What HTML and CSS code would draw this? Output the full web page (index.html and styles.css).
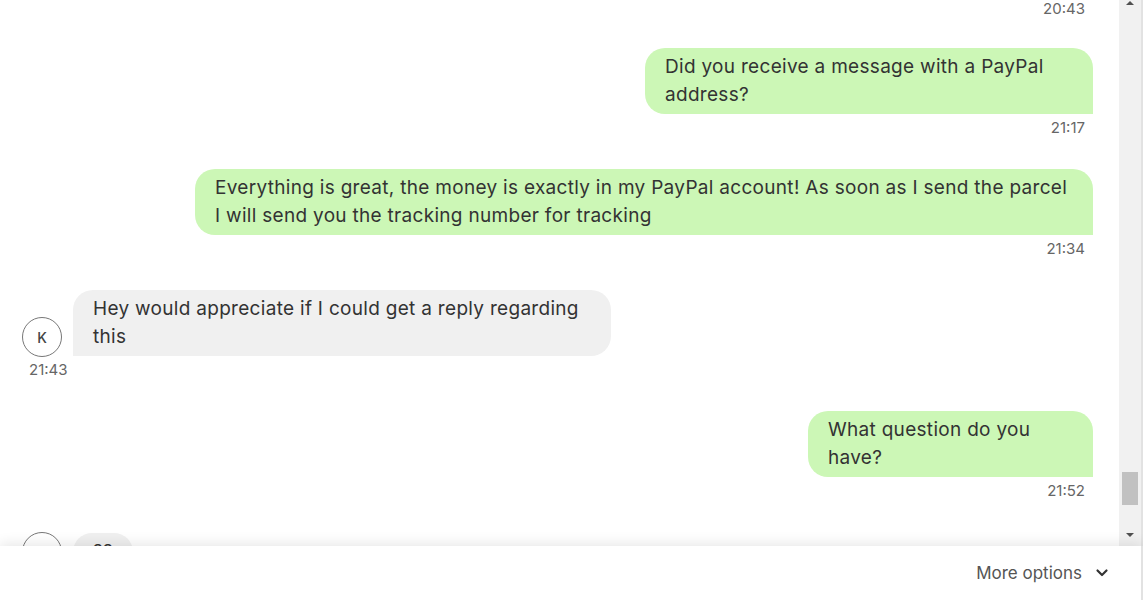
FILE: index.html
```html
<!DOCTYPE html>
<html lang="en">
<head>
<meta charset="UTF-8" />
<meta name="viewport" content="width=device-width, initial-scale=1" />
<title>Messages</title>
<link rel="stylesheet" href="styles.css">
</head>
<body>
<div class="chat">
  <div class="messages">
    <div class="msg out first">
      <div class="time">20:43</div>
    </div>

    <div class="msg out">
      <div class="bubble w-448">Did you receive a message with a PayPal<br>address?</div>
      <div class="time">21:17</div>
    </div>

    <div class="msg out">
      <div class="bubble w-898">Everything is great, the money is exactly in my PayPal account! As soon as I send the parcel<br>I will send you the tracking number for tracking</div>
      <div class="time">21:34</div>
    </div>

    <div class="msg in">
      <div class="row">
        <div class="avatar">K</div>
        <div class="bubble w-538">Hey would appreciate if I could get a reply regarding<br>this</div>
      </div>
      <div class="time">21:43</div>
    </div>

    <div class="msg out">
      <div class="bubble w-285">What question do you<br>have?</div>
      <div class="time">21:52</div>
    </div>

    <div class="msg in">
      <div class="row">
        <div class="avatar">K</div>
        <div class="bubble">??</div>
      </div>
    </div>
  </div>

  <!-- fake scrollbar, thumb sits near the bottom -->
  <div class="scrollbar">
    <div class="arrow up"></div>
    <div class="track">
      <div class="thumb"></div>
    </div>
    <div class="arrow down"></div>
  </div>
</div>

<footer class="footer">
  <button class="more">
    More options
    <svg width="14" height="14" viewBox="0 0 14 14"><path d="M2.5 4.5 L7 9 L11.5 4.5" fill="none" stroke="#333" stroke-width="2.2" stroke-linecap="round" stroke-linejoin="round"/></svg>
  </button>
</footer>
</body>
</html>
```

FILE: styles.css
```css
html, body {
  margin: 0;
  padding: 0;
  height: 100%;
  overflow: hidden;
  background: #fff;
}
body {
  font-family: Inter, 'Noto Sans', sans-serif;
  color: #333;
}
.chat {
  display: flex;
  height: 546px;
}
.messages {
  flex: 1;
  overflow: hidden;
  padding: 0 26px 0 22px;
}
.msg {
  display: flex;
  flex-direction: column;
  margin-bottom: 32px;
}
.msg.out {
  align-items: flex-end;
}
.msg.in {
  align-items: flex-start;
}
.msg.first {
  margin-top: -5px;
  margin-bottom: 30px;
}
.bubble {
  box-sizing: border-box;
  font-size: 19px;
  letter-spacing: 0.3px;
  line-height: 28px;
  padding: 5px 20px;
  white-space: nowrap;
}
.out .bubble {
  background: #ccf7b6;
  border-radius: 20px 20px 0 20px;
}
.in .bubble {
  background: #f0f0f0;
  border-radius: 20px 20px 20px 0;
}
.w-448 { width: 448px; }
.w-898 { width: 898px; }
.w-538 { width: 538px; }
.w-285 { width: 285px; }

.time {
  font-size: 15px;
  line-height: 18px;
  margin-top: 5px;
  color: #666;
}
.out .time {
  padding-right: 8px;
}
.in .time {
  padding-left: 7px;
}
.row {
  display: flex;
  align-items: flex-end;
  gap: 11px;
}
.avatar {
  box-sizing: border-box;
  width: 40px;
  height: 40px;
  border: 1px solid #777;
  border-radius: 50%;
  display: flex;
  align-items: center;
  justify-content: center;
  font-size: 14px;
  font-weight: 500;
  color: #444;
  margin-bottom: -1px;
  flex-shrink: 0;
}

.scrollbar {
  width: 22px;
  background: #f1f1f1;
  border-right: 2px solid #e2e2e2;
  display: flex;
  flex-direction: column;
  align-items: center;
}
.arrow {
  width: 0;
  height: 0;
  border-left: 4px solid transparent;
  border-right: 4px solid transparent;
}
.arrow.up {
  border-bottom: 4px solid #505050;
  margin-top: 1px;
}
.arrow.down {
  border-top: 4px solid #505050;
  margin-bottom: 9px;
}
.track {
  flex: 1;
  align-self: stretch;
  display: flex;
  justify-content: center;
}
.thumb {
  width: 16px;
  height: 33px;
  margin-top: 467px;
  background: #c1c1c1;
}

.footer {
  position: relative;
  height: 54px;
  background: #fff;
  box-shadow: 0 -3px 12px rgba(0, 0, 0, 0.09);
  border-right: 2px solid #e2e2e2;
  display: flex;
  align-items: center;
  justify-content: flex-end;
  padding-right: 32px;
}
.more {
  background: none;
  border: none;
  font-family: Inter, 'Noto Sans', sans-serif;
  font-size: 17px;
  color: #555;
  display: flex;
  align-items: center;
  gap: 13px;
  padding: 0;
  margin-top: -1px;
  cursor: pointer;
}
```
